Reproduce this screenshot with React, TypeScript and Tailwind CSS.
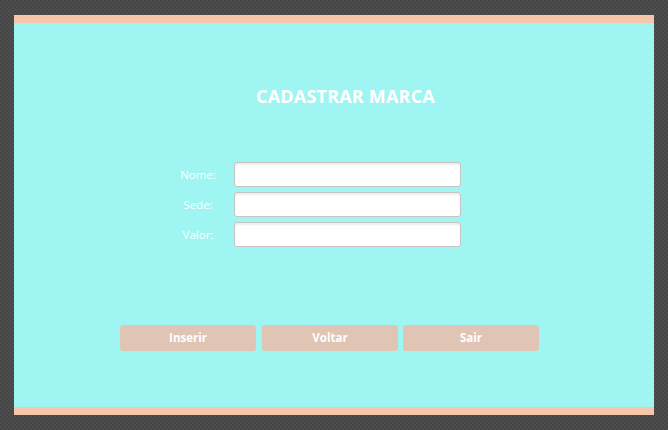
export default function App() {
  const fields = ['Nome:', 'Sede:', 'Valor:'];
  const buttons = ['Inserir', 'Voltar', 'Sair'];

  return (
    <div className="h-[430px] w-[668px] overflow-hidden bg-[#4a4a4a] bg-[repeating-conic-gradient(#4e4e4e_0_25%,#454545_0_50%)] bg-size-[4px_4px] pt-[15px] pl-[14px] font-['Open_Sans','Noto_Sans',sans-serif]">
      <div className="flex h-[400px] w-[640px] flex-col bg-[#9ff5f1]">
        <div className="h-[8px] shrink-0 bg-[#f6c6aa]" />

        <div className="flex-1">
          {/* title */}
          <div className="mt-[61px] ml-[242px] text-[18px] leading-[24px] font-bold tracking-[0.2px] text-white">
            CADASTRAR MARCA
          </div>

          {/* form */}
          <div className="mt-[54px] ml-[152px] flex flex-col gap-[5px]">
            {fields.map((f) => (
              <div key={f} className="flex items-center">
                <span className="w-[64px] text-center text-[11.5px] text-white">{f}</span>
                <input
                  className="ml-[4px] h-[25px] w-[227px] rounded-[3px] border border-[#c9c4c4] bg-white shadow-[inset_0_2px_2px_rgba(0,0,0,0.08)] outline-none"
                  type="text"
                />
              </div>
            ))}
          </div>

          {/* actions */}
          <div className="mt-[78px] ml-[106px] flex gap-[6px]">
            {buttons.map((b) => (
              <button
                key={b}
                className="h-[26px] w-[136px] rounded-[3px] bg-[#e0c5b5] text-[11.5px] font-bold text-white last:-ml-px"
              >
                {b}
              </button>
            ))}
          </div>
        </div>

        <div className="h-[8px] shrink-0 bg-[#f6c6aa]" />
      </div>
    </div>
  );
}
